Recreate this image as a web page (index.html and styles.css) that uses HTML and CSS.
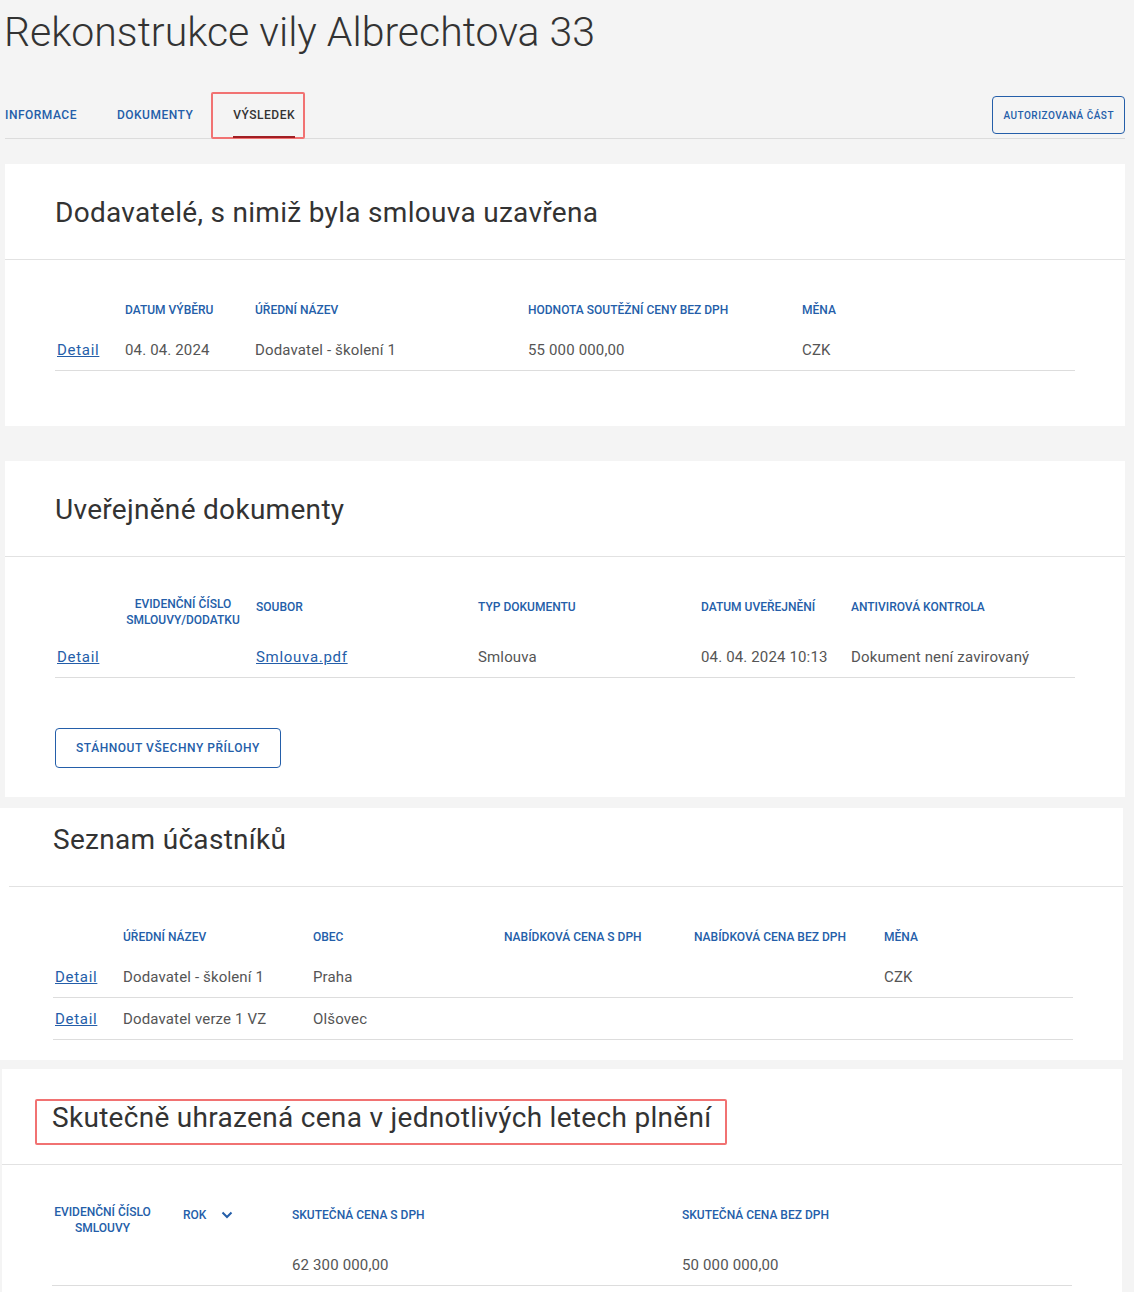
FILE: index.html
```html
<!DOCTYPE html>
<html lang="cs">
<head>
<meta charset="utf-8">
<title>Rekonstrukce vily Albrechtova 33</title>
<link rel="stylesheet" href="styles.css">
</head>
<body>
<div class="page">
  <h1 class="page-title">Rekonstrukce vily Albrechtova 33</h1>

  <div class="tabbar">
    <nav class="tabs">
      <a class="tab" href="#">INFORMACE</a>
      <a class="tab" href="#">DOKUMENTY</a>
      <a class="tab tab-active" href="#">VÝSLEDEK<span class="mark mark-tab"></span></a>
    </nav>
    <button class="btn btn-small" type="button">AUTORIZOVANÁ ČÁST</button>
  </div>

  <section class="card card-1">
    <div class="card-head"><h2>Dodavatelé, s nimiž byla smlouva uzavřena</h2></div>
    <div class="card-body">
      <div class="row head g1">
        <div class="th"></div>
        <div class="th">Datum výběru</div>
        <div class="th">Úřední název</div>
        <div class="th">Hodnota soutěžní ceny bez DPH</div>
        <div class="th">Měna</div>
      </div>
      <div class="row g1">
        <div class="td first"><a class="link" href="#">Detail</a></div>
        <div class="td">04. 04. 2024</div>
        <div class="td">Dodavatel - školení 1</div>
        <div class="td">55 000 000,00</div>
        <div class="td">CZK</div>
      </div>
    </div>
  </section>

  <section class="card card-2">
    <div class="card-head"><h2>Uveřejněné dokumenty</h2></div>
    <div class="card-body">
      <div class="row head g2 t2">
        <div class="th"></div>
        <div class="th center">Evidenční číslo<br>smlouvy/dodatku</div>
        <div class="th single pad12">Soubor</div>
        <div class="th single">Typ dokumentu</div>
        <div class="th single">Datum uveřejnění</div>
        <div class="th single">Antivirová kontrola</div>
      </div>
      <div class="row g2">
        <div class="td first"><a class="link" href="#">Detail</a></div>
        <div class="td"></div>
        <div class="td pad12"><a class="link" href="#">Smlouva.pdf</a></div>
        <div class="td">Smlouva</div>
        <div class="td">04. 04. 2024 10:13</div>
        <div class="td">Dokument není zavirovaný</div>
      </div>
      <button class="btn btn-large" type="button">STÁHNOUT VŠECHNY PŘÍLOHY</button>
    </div>
  </section>

  <section class="card card-3">
    <div class="card-head"><h2>Seznam účastníků</h2></div>
    <div class="card-body">
      <div class="row head g3">
        <div class="th"></div>
        <div class="th">Úřední název</div>
        <div class="th">Obec</div>
        <div class="th">Nabídková cena s DPH</div>
        <div class="th">Nabídková cena bez DPH</div>
        <div class="th">Měna</div>
      </div>
      <div class="row g3">
        <div class="td first"><a class="link" href="#">Detail</a></div>
        <div class="td">Dodavatel - školení 1</div>
        <div class="td">Praha</div>
        <div class="td"></div>
        <div class="td"></div>
        <div class="td">CZK</div>
      </div>
      <div class="row g3">
        <div class="td first"><a class="link" href="#">Detail</a></div>
        <div class="td">Dodavatel verze 1 VZ</div>
        <div class="td">Olšovec</div>
        <div class="td"></div>
        <div class="td"></div>
        <div class="td"></div>
      </div>
    </div>
  </section>

  <section class="card card-4">
    <div class="card-head"><h2><span class="marked">Skutečně uhrazená cena v jednotlivých letech plnění<span class="mark mark-title"></span></span></h2></div>
    <div class="card-body">
      <div class="row head g4 t2">
        <div class="th center">Evidenční číslo<br>smlouvy</div>
        <div class="th single pad30"><span class="sort">Rok<svg class="chev" width="12" height="8" viewBox="0 0 12 8"><path d="M1.5 1.5 L6 6 L10.5 1.5" fill="none" stroke="#245ea9" stroke-width="2"/></svg></span></div>
        <div class="th single">Skutečná cena s DPH</div>
        <div class="th single">Skutečná cena bez DPH</div>
      </div>
      <div class="row g4">
        <div class="td"></div>
        <div class="td"></div>
        <div class="td">62 300 000,00</div>
        <div class="td">50 000 000,00</div>
      </div>
    </div>
  </section>
</div>
</body>
</html>
```

FILE: styles.css
```css
* { box-sizing: border-box; }

body {
  margin: 0;
  background: #f4f4f4;
  font-family: Roboto, "Noto Sans", "Liberation Sans", sans-serif;
  color: #555;
}

.page {
  padding: 0 9px 40px 5px;
}

.page-title {
  margin: 8px 0 36px -1px;
  font-size: 41px;
  line-height: 48px;
  font-weight: 300;
  color: #333;
}

/* tabs */
.tabbar {
  display: flex;
  align-items: center;
  justify-content: space-between;
  height: 47px;
  border-bottom: 1px solid #dcdcdc;
}

.tabs {
  display: flex;
  gap: 40px;
  align-self: stretch;
}

.tab {
  position: relative;
  display: flex;
  align-items: center;
  font-size: 12px;
  font-weight: 500;
  letter-spacing: 0.5px;
  color: #245ea9;
  text-decoration: none;
}

.tab-active {
  color: #333;
}

.tab-active::after {
  content: "";
  position: absolute;
  left: 0;
  right: 0;
  bottom: 0;
  height: 2px;
  background: #a01f24;
}

.mark {
  position: absolute;
  border: 2px solid #f17272;
  border-radius: 2px;
  pointer-events: none;
}

.mark-tab {
  left: -22px;
  right: -10px;
  top: 0;
  bottom: -1px;
}

/* buttons */
.btn {
  display: inline-flex;
  align-items: center;
  justify-content: center;
  background: transparent;
  border: 1.5px solid #245ea9;
  border-radius: 4px;
  color: #245ea9;
  font-family: Roboto, "Noto Sans", sans-serif;
  font-weight: 500;
  cursor: pointer;
}

.btn-small {
  height: 38px;
  padding: 0 10px;
  font-size: 10px;
  letter-spacing: 0.5px;
}

.btn-large {
  height: 40px;
  margin-top: 50px;
  padding: 0 20px;
  font-size: 12px;
  letter-spacing: 0.55px;
}

/* cards */
.card {
  background: #fff;
}

.card-1 { margin-top: 25px; }
.card-2 { margin-top: 35px; }
.card-3 { margin: 11px 2px 0 -5px; }
.card-4 { margin: 9px 3px 0 -3px; }

.card-head {
  padding: 31px 50px 28px;
  border-bottom: 1px solid #e2e2e2;
}

.card-head h2 {
  margin: 0;
  font-size: 28px;
  line-height: 36px;
  font-weight: 400;
  letter-spacing: 0.3px;
  color: #333;
}

.card-body {
  padding: 31px 50px 55px;
}

.card-2 .card-body { padding-bottom: 29px; }

.card-3 .card-head {
  margin-left: 9px;
  padding: 14px 50px 28px 44px;
}
.card-3 .card-body { padding: 31px 50px 20px 53px; }

.card-4 .card-body { padding-bottom: 40px; }

.marked {
  position: relative;
  display: inline-block;
}

.mark-title {
  left: -17px;
  right: -16px;
  top: -1px;
  bottom: -9px;
}

/* tables */
.row {
  display: grid;
  align-items: start;
  border-bottom: 1px solid #ddd;
}

.row.head { border-bottom: none; }

.g1 { grid-template-columns: 70px 130px 273px 274px 1fr; }
.g2 { grid-template-columns: 67px 122px 234px 223px 150px 1fr; }
.g3 { grid-template-columns: 70px 190px 191px 190px 190px 1fr; }
.g4 { grid-template-columns: 101px 139px 390px 1fr; }

.th {
  padding: 11px 0 11px;
  font-size: 12px;
  line-height: 16px;
  font-weight: 500;
  text-transform: uppercase;
  color: #245ea9;
  white-space: nowrap;
}

.t2 .th { padding: 8px 0 8px; }
.t2 .th.single { padding-top: 11px; }

.th.center { text-align: center; }

.td {
  padding: 10px 0 9px;
  font-size: 15px;
  line-height: 22px;
  letter-spacing: 0.15px;
  color: #555;
  white-space: nowrap;
}

.first { padding-left: 2px; }
.pad12 { padding-left: 12px; }
.t2 .th.pad30, .pad30 { padding-left: 30px; }
.t2 .th.pad12 { padding-left: 12px; }

.link {
  color: #245ea9;
  text-decoration: underline;
  letter-spacing: 0.7px;
}

.sort {
  display: inline-flex;
  align-items: center;
}

.chev {
  margin-left: 15px;
}
```
